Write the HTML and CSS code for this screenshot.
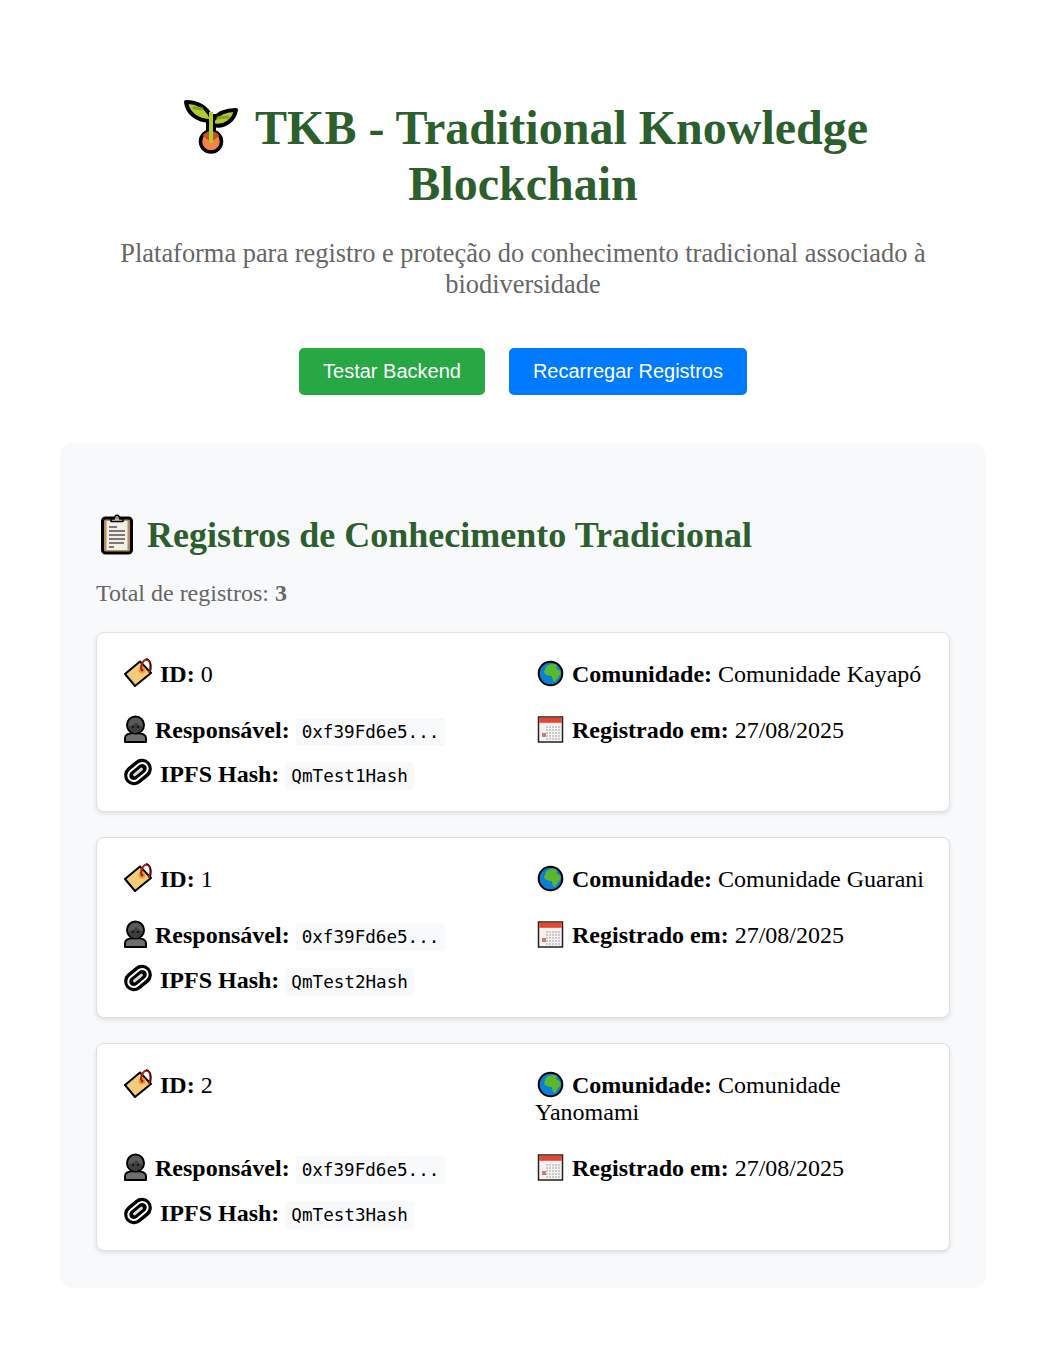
FILE: index.html
```html
<!DOCTYPE html>
<html lang="pt-BR">

<head>
    <meta charset="UTF-8">
    <meta name="viewport" content="width=device-width, initial-scale=1.0">
    <title>TKB - Traditional Knowledge Blockchain</title>
    <link rel="stylesheet" href="styles.css">
</head>

<body>
    <svg class="sprite" width="0" height="0">
        <symbol id="i-sprout" viewBox="-6 0 66 54">
            <path d="M27 40V14" stroke="#000" stroke-width="10"/>
            <path d="M27 17C23 7 13 2 2 2C3 12 12 21 27 21Z" fill="#b1cc33" stroke="#000" stroke-width="4" stroke-linejoin="round"/>
            <path d="M29 20C34 13 43 10 52 10C50 20 41 28 29 25Z" fill="#b1cc33" stroke="#000" stroke-width="4" stroke-linejoin="round"/>
            <path d="M10 8L18 9M34 18L44 17" stroke="#7fa52a" stroke-width="3" stroke-linecap="round"/>
            <circle cx="27" cy="41.500" r="10.500" fill="#f4834a" stroke="#000" stroke-width="3.500"/>
            <path d="M18.500 36A10 10 0 0 1 35.500 36L27 42Z" fill="#c1541f"/>
            <path d="M27 43V12" stroke="#b1cc33" stroke-width="4"/>
        </symbol>
        <symbol id="i-clipboard" viewBox="-2 0 42 42">
            <rect x="4.500" y="5" width="29" height="35" rx="3" fill="#b98d5b" stroke="#000" stroke-width="3"/>
            <rect x="8.500" y="8" width="21" height="29" fill="#f1efe9"/>
            <path d="M13 8.500V6H16.500C16.500 1 21.500 1 21.500 6H25V8.500Z" fill="#d0cfce" stroke="#000" stroke-width="1.500" stroke-linejoin="round"/>
            <circle cx="19" cy="5" r="1.200" fill="#b5763a"/>
            <path d="M11 14H19M11 18H27M11 22H27M11 26H27M11 30H26M11 34H16" stroke="#55534f" stroke-width="1.400"/>
        </symbol>
        <symbol id="i-tag" viewBox="0 0 31 30">
            <path d="M2 17L17 4.500L28 16L12 29Z" fill="#f4cb78" stroke="#000" stroke-width="2" stroke-linejoin="round"/>
            <circle cx="19" cy="13" r="3.500" fill="#f59a2f"/>
            <circle cx="19" cy="13" r="1.500" fill="#8f2418"/>
            <path d="M18 12C18 5 22 1.500 25 3C28 5 28 11 26 16" fill="none" stroke="#a5231a" stroke-width="2"/>
            <path d="M23 1.800C26 1.500 29.500 6 27.500 15" fill="none" stroke="#000" stroke-width="1"/>
        </symbol>
        <symbol id="i-person" viewBox="1 0 26 30">
            <path d="M3 29V25C3 21 8 20 13 20C18 20 24 21 24 25V29Z" fill="#6f6f6f" stroke="#000" stroke-width="2" stroke-linejoin="round"/>
            <circle cx="13.500" cy="12" r="8.500" fill="#5a5a5a" stroke="#000" stroke-width="2"/>
            <path d="M7 13C10 13 13 11 14 9C16 11 18 13 20 13C20 18 16 20 13.500 20C10 20 7 18 7 13Z" fill="#3d3d3d"/>
            <circle cx="11" cy="14" r=".9"/><circle cx="16" cy="14" r=".9"/>
        </symbol>
        <symbol id="i-link" viewBox="0 0 31 30">
            <g transform="rotate(-40 15 15)">
                <rect x="0" y="5" width="30" height="20" rx="10" fill="#000"/>
                <rect x="3" y="8.500" width="24" height="13" rx="6.500" fill="#fff"/>
                <rect x="5" y="10.500" width="20" height="9" rx="4.500" fill="#000"/>
                <rect x="9" y="13.500" width="12" height="3" rx="1.500" fill="#d8d8d8"/>
            </g>
        </symbol>
        <symbol id="i-globe" viewBox="0 0 31 30">
            <circle cx="15.500" cy="16.500" r="11.800" fill="#0b7fd6" stroke="#000" stroke-width="2"/>
            <path d="M11 10C13 7 19 6 22 8L21 11L24 13L26 15C25 19 22 21 20 25C18 25 17 21 17 19C14 19 10 18 9 15Z" fill="#5cb82b"/>
        </symbol>
        <symbol id="i-calendar" viewBox="0 0 31 30">
            <rect x="3.500" y="4" width="24" height="25" fill="#f4f3f1" stroke="#222" stroke-width="1.500"/>
            <rect x="4.200" y="4.800" width="22.600" height="5" fill="#e8452f"/>
            <path d="M11 14H25M11 17H25M11 20H25M11 23H25M11 26H25" stroke="#bdbdbd" stroke-width="1.500" stroke-dasharray="2 1"/>
            <rect x="7" y="20" width="4" height="4" fill="#e0736a"/>
        </symbol>
    </svg>

    <div class="container">
        <header class="header">
            <h1><svg class="icon-title"><use href="#i-sprout"/></svg> TKB - Traditional Knowledge Blockchain</h1>
            <p class="subtitle">Plataforma para registro e proteção do conhecimento tradicional associado à biodiversidade</p>
        </header>

        <div class="actions">
            <button class="btn btn-green">Testar Backend</button>
            <button class="btn btn-blue">Recarregar Registros</button>
        </div>

        <section class="panel">
            <h2><svg class="icon-heading"><use href="#i-clipboard"/></svg> Registros de Conhecimento Tradicional</h2>
            <p class="total">Total de registros: <strong>3</strong></p>

            <div class="record">
                <div class="record-grid">
                    <div class="field"><svg class="icon"><use href="#i-tag"/></svg> <strong>ID:</strong> 0</div>
                    <div class="field"><svg class="icon"><use href="#i-globe"/></svg> <strong>Comunidade:</strong> Comunidade Kayapó</div>
                    <div class="field"><svg class="icon icon-narrow"><use href="#i-person"/></svg> <strong>Responsável:</strong> <code>0xf39Fd6e5...</code></div>
                    <div class="field"><svg class="icon"><use href="#i-calendar"/></svg> <strong>Registrado em:</strong> 27/08/2025</div>
                </div>
                <div class="field hash"><svg class="icon"><use href="#i-link"/></svg> <strong>IPFS Hash:</strong> <code>QmTest1Hash</code></div>
            </div>

            <div class="record">
                <div class="record-grid">
                    <div class="field"><svg class="icon"><use href="#i-tag"/></svg> <strong>ID:</strong> 1</div>
                    <div class="field"><svg class="icon"><use href="#i-globe"/></svg> <strong>Comunidade:</strong> Comunidade Guarani</div>
                    <div class="field"><svg class="icon icon-narrow"><use href="#i-person"/></svg> <strong>Responsável:</strong> <code>0xf39Fd6e5...</code></div>
                    <div class="field"><svg class="icon"><use href="#i-calendar"/></svg> <strong>Registrado em:</strong> 27/08/2025</div>
                </div>
                <div class="field hash"><svg class="icon"><use href="#i-link"/></svg> <strong>IPFS Hash:</strong> <code>QmTest2Hash</code></div>
            </div>

            <div class="record">
                <div class="record-grid">
                    <div class="field"><svg class="icon"><use href="#i-tag"/></svg> <strong>ID:</strong> 2</div>
                    <div class="field"><svg class="icon"><use href="#i-globe"/></svg> <strong>Comunidade:</strong> Comunidade Yanomami</div>
                    <div class="field"><svg class="icon icon-narrow"><use href="#i-person"/></svg> <strong>Responsável:</strong> <code>0xf39Fd6e5...</code></div>
                    <div class="field"><svg class="icon"><use href="#i-calendar"/></svg> <strong>Registrado em:</strong> 27/08/2025</div>
                </div>
                <div class="field hash"><svg class="icon"><use href="#i-link"/></svg> <strong>IPFS Hash:</strong> <code>QmTest3Hash</code></div>
            </div>
        </section>
    </div>
</body>

</html>
```

FILE: styles.css
```css
body {
    margin: 0;
    background: #fff;
    color: #000;
    font-family: "Liberation Serif", "Times New Roman", serif;
}

.sprite {
    position: absolute;
}

.container {
    padding: 60px 60px;
}

.header {
    text-align: center;
    margin-bottom: 48px;
    padding: 0 32px;
}

h1 {
    margin: 40px 0 26px;
    font-size: 48px;
    line-height: 56px;
    color: #2c5f2d;
}

.subtitle {
    margin: 0 -32px;
    font-size: 26.4px;
    line-height: 31px;
    color: #666;
}

.actions {
    display: flex;
    justify-content: center;
    gap: 24px;
    margin-bottom: 48px;
}

.btn {
    height: 47px;
    padding: 0 24px;
    border: none;
    border-radius: 5px;
    color: #fff;
    font-family: "Liberation Sans", Arial, sans-serif;
    font-size: 20px;
    cursor: pointer;
}

.btn-green {
    background: #28a745;
}

.btn-blue {
    background: #007bff;
}

.panel {
    background: #f8f9fa;
    border-radius: 12px;
    padding: 36px 36px 37px;
}

h2 {
    margin: 36px 0 24px;
    font-size: 36px;
    line-height: 40px;
    color: #2c5f2d;
}

.total {
    margin: 0 0 25px;
    font-size: 24px;
    line-height: 28px;
    color: #666;
}

.record {
    background: #fff;
    border: 1px solid #e0e0e0;
    border-radius: 8px;
    box-shadow: 0 2px 4px rgba(0, 0, 0, 0.1);
    padding: 24px 24px 22.6px;
    margin-bottom: 25px;
}

.record:last-child {
    margin-bottom: 0;
}

.record-grid {
    display: grid;
    grid-template-columns: 1fr 1fr;
    gap: 24px;
}

.field {
    font-size: 24px;
    line-height: 27.6px;
}

.record-grid .field:nth-child(odd),
.hash {
    padding-left: 2px;
}

.hash {
    margin-top: 13px;
}

code {
    font-family: "DejaVu Sans Mono", monospace;
    font-size: 17.6px;
    line-height: 1;
    background: #f8f9fa;
    padding: 4px 6px;
    border-radius: 4px;
}

.icon {
    width: 31px;
    height: 30px;
    vertical-align: -5px;
}

.icon-narrow {
    width: 26px;
}

.icon-title {
    width: 66px;
    height: 54px;
    margin: -10px 0;
    vertical-align: 0;
}

.icon-heading {
    width: 42px;
    height: 42px;
    margin: -6px 0;
    vertical-align: -2px;
}
```
